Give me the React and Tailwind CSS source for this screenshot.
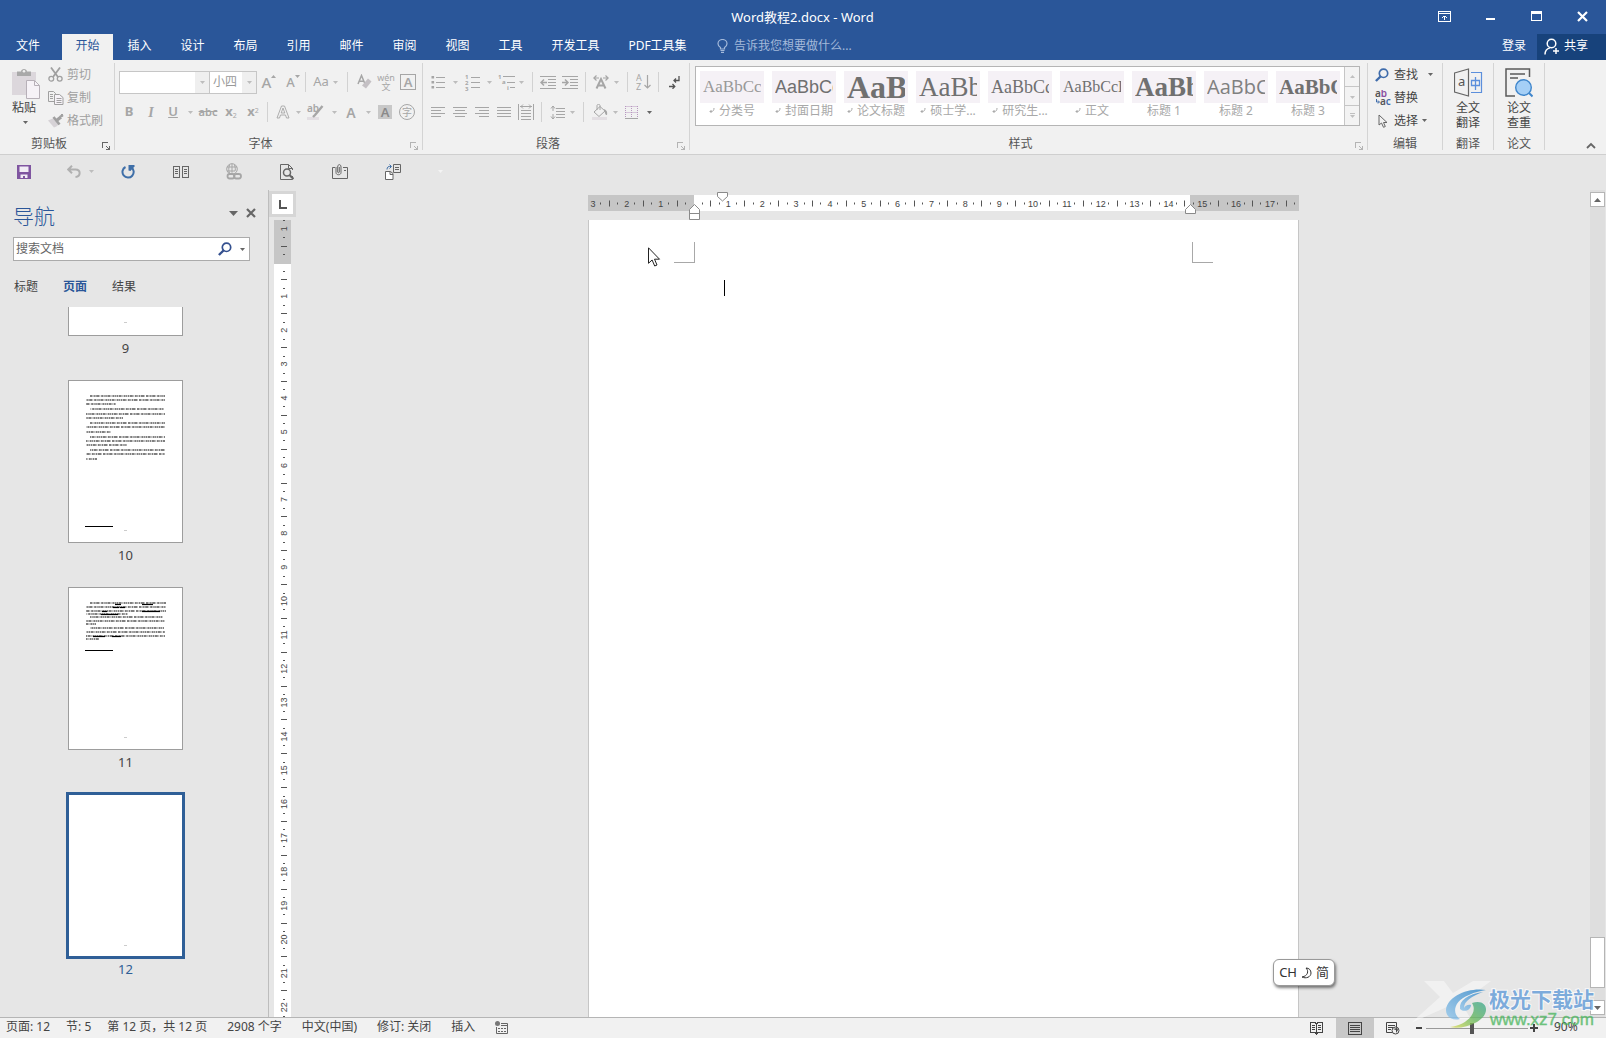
import clsx from "clsx";

const Svg = ({ w, h, children, ...rest }) => (
  <svg width={w} height={h} viewBox={`0 0 ${w} ${h}`} fill="none" stroke="currentColor" className="shrink-0" aria-hidden="true" {...rest}>
    {children}
  </svg>
);

const Caret = ({ className = "w-3", dark }) => (
  <span className={clsx("flex justify-center shrink-0", className, dark ? "text-[#666]" : "text-[#bdbdbd]")}>
    <Svg w={5} h={3}>
      <path d="M0 0h5L2.5 3z" fill="currentColor" stroke="none" />
    </Svg>
  </span>
);

const Sep = ({ className = "mx-1" }) => <span className={clsx("w-px h-5 bg-[#d2d2d2] shrink-0", className)} />;

const Tool = ({ label, className = "w-[22px]", children }) => (
  <button aria-label={label} className={clsx("h-6 flex items-center justify-center shrink-0 text-[#a6a6a6]", className)}>
    {children}
  </button>
);

const Launcher = ({ dark }) => (
  <button aria-label="更多选项" className={clsx("w-4 h-5 flex items-center justify-center shrink-0 pt-[5px]", dark ? "text-[#666]" : "text-[#b4b4b4]")}>
    <Svg w={8} h={8} shapeRendering="crispEdges">
      <path d="M.5 6V.5H6M4 4l3 3M7.5 3.5v4h-4" />
    </Svg>
  </button>
);

function Group({ label, launcher, dark, className, children }) {
  return (
    <section aria-label={label} className={clsx("flex flex-col border-r border-[#d4d4d4] mb-1 mt-[3px]", className)}>
      <div className="flex-1 min-h-0">{children}</div>
      <div className="flex h-[13px] items-center">
        <span className="flex-1 text-center text-[#555]">{label}</span>
        {launcher && <Launcher dark={dark} />}
      </div>
    </section>
  );
}

/* ---------- title bar and tabs ---------- */

function TitleBar() {
  return (
    <header className="flex h-[34px] items-center bg-[#2a5699] text-white">
      <div className="w-[184px]" />
      <h1 className="flex-1 pt-[2px] text-center text-[13px]">Word教程2.docx - Word</h1>
      <div className="flex w-[185px] items-center pb-px">
        <button aria-label="功能区显示选项" className="flex w-[46px] justify-center">
          <Svg w={13} h={11} shapeRendering="crispEdges">
            <path d="M.5.5h12v10H.5zM1 2.5h11M6.5 9V4.5M4 6.5h1M5 5.5h3M8 6.5h1" />
          </Svg>
        </button>
        <button aria-label="最小化" className="flex w-[46px] justify-center pt-1">
          <Svg w={9} h={2}><path d="M0 1h9" strokeWidth="2" /></Svg>
        </button>
        <button aria-label="最大化" className="flex w-[46px] justify-center">
          <Svg w={11} h={11} shapeRendering="crispEdges">
            <path d="M.5.5h10v9H.5zM0 2h11M0 1h11" />
          </Svg>
        </button>
        <button aria-label="关闭" className="flex w-[46px] justify-center">
          <Svg w={11} h={11}><path d="M1 1l9 9M10 1l-9 9" strokeWidth="2.2" /></Svg>
        </button>
      </div>
    </header>
  );
}

const tabs = ["开始", "插入", "设计", "布局", "引用", "邮件", "审阅", "视图", "工具"];

function TabBar() {
  return (
    <nav className="flex h-[26px] bg-[#2a5699] text-white *:pb-[2px]">
      <button className="mr-[6px] w-14">文件</button>
      {tabs.map((t) => (
        <button key={t} className={clsx(t === "开始" ? "w-[51px] bg-[#f1f1f1] text-[#2a5699]" : "w-[53px]")}>
          {t}
        </button>
      ))}
      <button className="w-[77px]">开发工具</button>
      <button className="w-[87px]">PDF工具集</button>
      <button className="ml-4 flex items-center gap-[6px] text-[#a3b9da]">
        <Svg w={11} h={14}>
          <path d="M3.5 10V8.6C2 7.6 1 6.500 1 4.800a4.400 4.200 0 0 1 9 0C10 6.500 9 7.600 7.500 8.600V10zM3.500 11.500h4M4 13.300h3" strokeWidth="1.200" />
        </Svg>
        告诉我您想要做什么...
      </button>
      <div className="flex-1" />
      <button className="w-[46px]">登录</button>
      <button className="flex w-[69px] items-center gap-1 bg-[#17427b] pl-[7px]">
        <Svg w={16} h={17}>
          <circle cx="7.500" cy="5.500" r="4.300" strokeWidth="1.500" />
          <path d="M1 16.500c0-3.500 2-5.800 5-6.600M12 10v6M9 13h6" strokeWidth="1.500" />
        </Svg>
        共享
      </button>
    </nav>
  );
}

/* ---------- ribbon ---------- */

const PasteIcon = () => (
  <Svg w={28} h={31}>
    <path d="M0 4h24v23H0z" fill="#dcd7dc" stroke="none" />
    <path d="M5 8V3.500h4C9 0 15 0 15 3.500h4V8z" fill="#a9a9a9" stroke="none" />
    <circle cx="12" cy="3.300" r="1.300" fill="#f1f1f1" stroke="none" />
    <path d="M14.500 12.500h8l5 5v13h-13z" fill="#f6f2f7" stroke="#b7b0b8" />
    <path d="M22.500 12.500v5h5" stroke="#b7b0b8" />
  </Svg>
);

const CutIcon = () => (
  <Svg w={15} h={15}>
    <path d="M3 .5l7 9.500M12 .5l-7 9.500" strokeWidth="1.800" />
    <circle cx="3.300" cy="11.700" r="2.400" strokeWidth="1.300" />
    <circle cx="11.700" cy="11.700" r="2.400" strokeWidth="1.300" />
  </Svg>
);

const CopyIcon = () => (
  <Svg w={16} h={14}>
    <path d="M6 10.500H.5V.5h5l2 2V4M2 3.500h3M2 5.500h3M2 7.500h3" />
    <path d="M6.500 3.500h5l3.500 3v7H6.500z" fill="#f6f2f7" />
    <path d="M8.500 7.500h5M8.500 9.500h5M8.500 11.500h5" />
  </Svg>
);

const BrushIcon = () => (
  <Svg w={16} h={14}>
    <path d="M0 6.500L6 4l5 6c-2 2.200-3.500 3-5 3.500z" fill="#d6d2d6" stroke="none" />
    <path d="M5.500 3l6 7.500" strokeWidth="2.600" />
    <path d="M8.500 6.500L13 3" strokeWidth="3.400" />
    <path d="M12 2.500l2.500-2M13.500 .5l1.500 2" strokeWidth="1.600" />
  </Svg>
);

function ClipboardGroup() {
  const items = [["剪切", CutIcon], ["复制", CopyIcon], ["格式刷", BrushIcon]];
  return (
    <Group label="剪贴板" launcher dark className="w-[115px]">
      <div className="flex">
        <button className="flex w-12 flex-col items-center pl-[3px] pt-[5px] text-[#444]">
          <PasteIcon />
          <span className="-ml-[3px] leading-[18px]">粘贴</span>
          <span className="pt-[4px]"><Caret dark /></span>
        </button>
        <div className="flex flex-col">
          {items.map(([name, Icon]) => (
            <button key={name} className="flex h-[23px] items-center text-[#a0a0a0]">
              <span className="flex w-[19px]"><Icon /></span>
              {name}
            </button>
          ))}
        </div>
      </div>
    </Group>
  );
}

function FontGroup() {
  return (
    <Group label="字体" launcher className="w-[308px]">
      <div className="flex h-6 mt-[7px] items-center pl-1">
        <label className="relative flex h-[23px] w-[91px] items-center border border-[#c6c6c6] bg-white">
          <select aria-label="字体" className="h-full w-full appearance-none bg-transparent" defaultValue="">
            <option value=""></option>
          </select>
          <span className="pointer-events-none absolute right-0 flex h-full items-center bg-[#efefef] px-px"><Caret /></span>
        </label>
        <label className="relative flex h-[23px] w-[47px] items-center border border-l-0 border-[#c6c6c6] bg-white">
          <select aria-label="字号" className="h-full w-full appearance-none bg-transparent pl-[3px] text-[#999]" defaultValue="小四">
            <option>小四</option>
          </select>
          <span className="pointer-events-none absolute right-0 flex h-full items-center bg-[#efefef] px-px"><Caret /></span>
        </label>
        <Tool label="增大字号" className="w-6">
          <span className="text-[15px] font-medium leading-5">A</span>
          <Svg w={5} h={14}><path d="M0 3h5L2.500 0z" fill="currentColor" stroke="none" /></Svg>
        </Tool>
        <Tool label="减小字号" className="w-6">
          <span className="text-[13px] font-medium leading-5">A</span>
          <Svg w={5} h={14}><path d="M0 0h5L2.500 3z" fill="currentColor" stroke="none" /></Svg>
        </Tool>
        <Sep className="mr-[5px]" />
        <Tool label="更改大小写" className="w-5"><span className="text-[13px]">Aa</span></Tool>
        <Caret className="w-2" />
        <Sep className="ml-2 mr-[5px]" />
        <Tool label="清除所有格式">
          <Svg w={15} h={16}>
            <path d="M1 10L4.500 1.500 8 10M2.200 7.200h4.600" strokeWidth="1.500" />
            <path d="M11 4.500l3.500 3L9 14.500 5 11.500z" fill="#c4c0c4" stroke="none" />
          </Svg>
        </Tool>
        <Tool label="拼音指南">
          <span className="flex flex-col items-center text-[9px] leading-[9px]">
            <span>wén</span>
            <span>文</span>
          </span>
        </Tool>
        <Tool label="字符边框">
          <span className="flex size-4 items-center justify-center border border-[#a6a6a6] text-[13px] font-semibold leading-none">A</span>
        </Tool>
      </div>
      <div className="flex h-6 mt-[6px] items-center pl-[3px]">
        <Tool label="加粗"><span className="text-[13px] font-bold">B</span></Tool>
        <Tool label="倾斜"><span className="font-['Liberation_Serif',serif] text-[14px] font-bold italic">I</span></Tool>
        <Tool label="下划线"><span className="text-[13px] font-semibold underline">U</span></Tool>
        <Caret />
        <Tool label="删除线" className="w-6"><span className="text-[11px] font-semibold line-through">abc</span></Tool>
        <Tool label="下标"><span className="text-[13px] font-bold">x<sub className="text-[7px] font-normal">2</sub></span></Tool>
        <Tool label="上标"><span className="text-[13px] font-bold">x<sup className="text-[7px] font-normal">2</sup></span></Tool>
        <Sep className="ml-[3px] mr-1" />
        <Tool label="文本效果">
          <Svg w={14} h={14}>
            <path d="M1 13L5.500 1h3L13 13h-2.500L9.500 10h-5L3.500 13zM5.200 8h3.600L7 3z" strokeWidth=".9" />
          </Svg>
        </Tool>
        <Caret className="w-2" />
        <Tool label="突出显示" className="w-[26px]">
          <Svg w={17} h={16}>
            <path d="M0 13h12v3H0z" fill="#e3dfe3" stroke="none" />
            <text x="0" y="8" fontSize="10" fontWeight="600" fill="currentColor" stroke="none">ab</text>
            <path d="M15.500 2L8 11l-2 2" strokeWidth="2.400" />
          </Svg>
        </Tool>
        <Caret />
        <Tool label="字体颜色"><span className="text-[14px] font-semibold">A</span></Tool>
        <Caret />
        <Tool label="字符底纹">
          <span className="flex h-[14px] w-[14px] items-center justify-center bg-[#c8c8c8] text-[13px] font-semibold leading-none text-[#8a8a8a]">A</span>
        </Tool>
        <Tool label="带圈字符">
          <span className="flex size-4 items-center justify-center rounded-full border border-[#a6a6a6] text-[10px] leading-none">字</span>
        </Tool>
      </div>
    </Group>
  );
}

const lineSets = {
  left: [[0, 14], [0, 10], [0, 14], [0, 10]],
  center: [[0, 14], [2, 12], [0, 14], [2, 12]],
  right: [[0, 14], [4, 14], [0, 14], [4, 14]],
  justify: [[0, 14], [0, 14], [0, 14], [0, 14]],
};

const Lines = ({ kind }) => (
  <Svg w={14} h={11} shapeRendering="crispEdges">
    {lineSets[kind].map(([a, b], i) => (
      <path key={i} d={`M${a} ${i * 3 + 0.5}H${b}`} />
    ))}
  </Svg>
);

function ParagraphGroup() {
  return (
    <Group label="段落" launcher className="w-[267px]">
      <div className="flex h-6 mt-[7px] items-center pl-1">
        <Tool label="项目符号">
          <Svg w={14} h={15}>
            <path d="M5 2.500h9M5 7.500h9M5 12.500h9" />
            <path d="M.5 1h2.600v2.600H.5zM.5 6h2.600v2.600H.5zM.5 11h2.600v2.600H.5z" fill="currentColor" stroke="none" />
          </Svg>
        </Tool>
        <Caret />
        <Tool label="编号">
          <Svg w={15} h={17}>
            <path d="M6 3.500h9M6 8.500h9M6 13.500h9" />
            <g fontSize="6" fontWeight="700" fill="currentColor" stroke="none">
              <text x="0" y="5">1</text>
              <text x="0" y="11">2</text>
              <text x="0" y="17">3</text>
            </g>
          </Svg>
        </Tool>
        <Caret />
        <Tool label="多级列表">
          <Svg w={17} h={17}>
            <path d="M5 2.500h12M9 8.500h8M12 13.500h5" />
            <g fontSize="6" fontWeight="700" fill="currentColor" stroke="none">
              <text x="0" y="5">1</text>
              <text x="4" y="10">a</text>
              <text x="9" y="16">i</text>
            </g>
          </Svg>
        </Tool>
        <Caret className="w-2" />
        <Sep className="ml-[7px] mr-1" />
        <Tool label="减少缩进量">
          <Svg w={16} h={13}>
            <path d="M0 .5h16M8 3.500h8M8 6.500h8M8 9.500h8M0 12.500h16" />
            <path d="M7 6.500H1M4 3.500l-3 3 3 3" strokeWidth="1.500" />
          </Svg>
        </Tool>
        <Tool label="增加缩进量">
          <Svg w={16} h={13}>
            <path d="M0 .5h16M8 3.500h8M8 6.500h8M8 9.500h8M0 12.500h16" />
            <path d="M0 6.500h6M3 3.500l3 3-3 3" strokeWidth="1.500" />
          </Svg>
        </Tool>
        <Sep />
        <Tool label="中文版式">
          <Svg w={16} h={14}>
            <path d="M3.500 13.500L8 4l4.500 9.500M5 10.500h6" strokeWidth="2" />
            <path d="M3.500 .5L.8 3l2.700 2.500M1 3h5M12.500 .5L15.200 3l-2.700 2.500M15 3h-5" strokeWidth="1.200" />
          </Svg>
        </Tool>
        <Caret className="w-2" />
        <Sep className="ml-[7px] mr-1" />
        <Tool label="排序">
          <Svg w={15} h={16}>
            <g fontSize="9" fill="currentColor" stroke="none">
              <text x="0" y="7">A</text>
              <text x="0" y="16">Z</text>
            </g>
            <path d="M11.500 1v13M8.500 11l3 3 3-3" strokeWidth="1.200" />
          </Svg>
        </Tool>
        <Sep />
        <Tool label="显示编辑标记">
          <Svg w={11} h={13} stroke="#555">
            <path d="M10 0v4.500H5.500M7 2.500l-2 2 2 2M0 10.500h5M3.500 8l2.300 2.500-2.300 2.300" strokeWidth="1.300" />
          </Svg>
        </Tool>
      </div>
      <div className="flex h-6 mt-[6px] items-center pl-1">
        <Tool label="左对齐"><Lines kind="left" /></Tool>
        <Tool label="居中"><Lines kind="center" /></Tool>
        <Tool label="右对齐"><Lines kind="right" /></Tool>
        <Tool label="两端对齐"><Lines kind="justify" /></Tool>
        <Tool label="分散对齐">
          <Svg w={16} h={16}>
            <path d="M.5 0v16M15.500 0v16M3 6.500h10M3 9.500h10M3 12.500h10M3 15.500h10M2 2.500h12M5 .5l-2 2 2 2M11 .5l2 2-2 2" />
          </Svg>
        </Tool>
        <Sep />
        <Tool label="行和段落间距">
          <Svg w={15} h={15}>
            <path d="M6 3.500h9M6 6.500h9M6 9.500h9M6 12.500h9M3 1v5M1 3.500L3 1l2 2.500M3 9v5M1 11.500L3 14l2-2.500" />
          </Svg>
        </Tool>
        <Caret className="w-2" />
        <Sep className="ml-[7px] mr-[5px]" />
        <Tool label="底纹">
          <Svg w={16} h={16}>
            <path d="M0 13h15v3H0z" fill="#e3dfe3" stroke="none" />
            <path d="M2 8l6-5.500L13 7l-6 5.500zM5 6V1.500c0-1.500 3-1.500 3 0V6" />
            <path d="M12 5c3 1.500 3.500 3 3 6-1.500 0-2-1-3-6z" fill="currentColor" stroke="none" />
          </Svg>
        </Tool>
        <Caret className="w-2" />
        <Tool label="边框" className="w-6">
          <Svg w={13} h={13}>
            <path d="M.5 .5h12M.5 6.500h12M.5 0v12M6.500 0v12M12.500 0v12" stroke="#b898c0" strokeDasharray="1 1" />
            <path d="M0 12.500h13" stroke="#a6a6a6" />
          </Svg>
        </Tool>
        <Caret dark />
      </div>
    </Group>
  );
}

const styleItems = [
  { name: "分类号", mark: true, sample: "AaBbCc", font: "font-['Liberation_Serif',serif] text-[17px] text-[#999]" },
  { name: "封面日期", mark: true, sample: "AaBbCc", font: "font-['Liberation_Sans',sans-serif] text-[18px] text-[#707070]" },
  { name: "论文标题", mark: true, sample: "AaBb", font: "font-['Liberation_Serif',serif] text-[32px] font-bold text-[#707070]" },
  { name: "硕士学...", mark: true, sample: "AaBb", font: "font-['Liberation_Serif',serif] text-[27px] text-[#707070]" },
  { name: "研究生...", mark: true, sample: "AaBbCc", font: "font-['Liberation_Serif',serif] text-[18px] text-[#707070]" },
  { name: "正文", mark: true, sample: "AaBbCcDd", font: "font-['Liberation_Serif',serif] text-[16px] text-[#707070]" },
  { name: "标题 1", sample: "AaBb", font: "font-['Liberation_Serif',serif] text-[27px] font-bold text-[#707070]" },
  { name: "标题 2", sample: "AaBbCc", font: "font-['Open_Sans',sans-serif] text-[20px] text-[#808080]" },
  { name: "标题 3", sample: "AaBbCc", font: "font-['Liberation_Serif',serif] text-[21px] font-bold text-[#707070]" },
];

function StylesGroup() {
  return (
    <Group label="样式" launcher className="min-w-0 flex-1">
      <div className="ml-[5px] mr-[7px] mt-[3px] flex h-[60px] border border-[#b5b5b5] bg-white">
        <div className="flex min-w-0 flex-1 overflow-hidden">
          {styleItems.map((s) => (
            <button key={s.name} className="flex w-[72px] shrink-0 flex-col items-center pt-1">
              <span className="flex h-8 w-16 items-center overflow-hidden bg-[#f5f1f6] px-[3px]">
                <span className={clsx("block w-full overflow-hidden text-left leading-8", s.font)}>{s.sample}</span>
              </span>
              <span className="flex items-center gap-1 leading-4 text-[#a8a8a8]">
                {s.mark && (
                  <Svg w={6} h={6}><path d="M5 0c0 2-.5 3.500-3 3.500H1M2.500 2L1 3.500 2.500 5" /></Svg>
                )}
                {s.name}
              </span>
            </button>
          ))}
        </div>
        <div className="flex w-[15px] flex-col divide-y divide-[#c6c6c6] border-l border-[#c6c6c6] bg-[#f3f3f3]">
          {["上一行", "下一行", "其他"].map((n) => (
            <button key={n} aria-label={n} className="flex flex-1 items-center justify-center text-[#c0c0c0]">
              <Svg w={5} h={5}>
                {n === "其他" && <path d="M0 .5h5" />}
                <path d={n === "上一行" ? "M0 4h5L2.500 1z" : "M0 2h5L2.500 5z"} fill="currentColor" stroke="none" />
              </Svg>
            </button>
          ))}
        </div>
      </div>
    </Group>
  );
}

const SearchGlyph = ({ size = 14, color = "#3f6cab" }) => (
  <svg width={size} height={size} viewBox="0 0 14 14" fill="none" stroke={color} aria-hidden="true">
    <circle cx="8.500" cy="5.300" r="4.200" strokeWidth="1.700" />
    <path d="M5.500 8.500L.9 13" strokeWidth="2.400" />
  </svg>
);

function EditGroup() {
  return (
    <Group label="编辑" className="w-[75px]">
      <div className="flex flex-col pl-[7px] text-[#444]">
        <button className="flex h-[23px] items-center">
          <span className="flex w-[19px]"><SearchGlyph /></span>查找
          <Caret dark className="ml-[6px] w-3" />
        </button>
        <button className="flex h-[23px] items-center">
          <span className="flex w-[19px]">
            <Svg w={17} h={16}>
              <g fontSize="10" fontWeight="600" stroke="none">
                <text x="0" y="7" fill="#555">a<tspan fill="#8a4fa0">b</tspan></text>
                <text x="5" y="15" fill="#555">a<tspan fill="#3f6cab">c</tspan></text>
              </g>
              <path d="M1.500 9v3H4M3 10.500L4.500 12 3 13.500" stroke="#3f6cab" />
            </Svg>
          </span>
          替换
        </button>
        <button className="flex h-[23px] items-center">
          <span className="flex w-[19px] pl-[3px]">
            <Svg w={10} h={14} stroke="#666">
              <path d="M1 1v10l2.500-2 2 4.300 1.800-.8L5.500 8.500H9z" />
            </Svg>
          </span>
          选择
          <Caret dark />
        </button>
      </div>
    </Group>
  );
}

const TranslateIcon = () => (
  <Svg w={29} h={29}>
    <path d="M.5 5L14.500 1v27L.5 24z" stroke="#666" strokeWidth="1.200" />
    <text x="4" y="18" fontSize="13" fill="#555" stroke="none">a</text>
    <path d="M17 4.500h10.500v20H17" stroke="#5c8fdc" strokeWidth="1.200" />
    <path d="M17.500 12.500h8v5h-8zM21.500 9v13" stroke="#5c8fdc" strokeWidth="1.300" />
  </Svg>
);

const CheckIcon = () => (
  <Svg w={28} h={30}>
    <path d="M24.500 9V1H1v27h9M5 6h15M5 10h8" stroke="#5a5a5a" strokeWidth="1.500" />
    <circle cx="18.500" cy="19.500" r="7.800" fill="#a5cff6" stroke="#3f86cc" strokeWidth="1.400" />
    <path d="M24 25l3.500 3.500" stroke="#3f86cc" strokeWidth="2" />
  </Svg>
);

function BigGroup({ label, lines, icon }) {
  return (
    <Group label={label} className="w-[51px]">
      <button className="flex w-full flex-col items-center pt-[5px] leading-[15px] text-[#444]">
        <span className="mb-[3px] flex h-[29px]">{icon}</span>
        {lines.map((l) => <span key={l}>{l}</span>)}
      </button>
    </Group>
  );
}

function Ribbon() {
  return (
    <div className="flex h-[95px] border-b border-[#cfcfcf] bg-[#f1f1f1]">
      <ClipboardGroup />
      <FontGroup />
      <ParagraphGroup />
      <StylesGroup />
      <EditGroup />
      <BigGroup label="翻译" lines={["全文", "翻译"]} icon={<TranslateIcon />} />
      <BigGroup label="论文" lines={["论文", "查重"]} icon={<CheckIcon />} />
      <div className="flex w-[61px] items-end justify-end pb-[5px] pr-[10px]">
        <button aria-label="折叠功能区" className="text-[#666]">
          <Svg w={10} h={7}><path d="M1 6l4-4 4 4" strokeWidth="1.800" /></Svg>
        </button>
      </div>
    </div>
  );
}

function QuickAccess() {
  const cell = "flex w-[53px] items-center justify-center";
  return (
    <div className="flex h-[35px] shrink-0 items-center pb-[2px] text-[#666]">
      <button aria-label="保存" className="flex w-12 justify-center">
        <Svg w={14} h={14}>
          <path d="M0 0h14v14H0z" fill="#7f55a0" stroke="none" />
          <path d="M2.500 1.500h9V7h-9zM3.500 9.500h7V13H8v-2H6v2H3.500z" fill="#f1ecf5" stroke="none" />
        </Svg>
      </button>
      <div className="flex w-[53px] items-center pl-[19px] text-[#b0b0b0]">
        <button aria-label="撤消">
          <Svg w={14} h={13}>
            <path d="M5 .8L1.200 4.500 5 8.200M1.500 4.500h7c5.500 0 5.500 7 0 7.500" strokeWidth="2" />
          </Svg>
        </button>
        <button aria-label="撤消列表" className="ml-1"><Caret /></button>
      </div>
      <button aria-label="重复" className={clsx(cell, "text-[#3f6fa8]")}>
        <Svg w={14} h={14}>
          <path d="M4.500 2A5.600 5.600 0 1 0 10 2.200" strokeWidth="2" />
          <path d="M7.500 0h6v1.500L9.500 6l-2-.5z" fill="currentColor" stroke="none" />
        </Svg>
      </button>
      <button aria-label="并排查看" className={cell}>
        <Svg w={16} h={12} shapeRendering="crispEdges">
          <path d="M.5.5h6v11h-6zM9.500.5h6v11h-6zM2 3.500h3M2 5.500h3M2 7.500h3M11 3.500h3M11 5.500h3M11 7.500h3" />
        </Svg>
      </button>
      <button aria-label="超链接" className={clsx(cell, "text-[#a6a6a6]")}>
        <Svg w={16} h={17}>
          <circle cx="6" cy="6" r="5.300" />
          <path d="M6 .7v9M1 4h10M1 8h8M3.500 2c-1 3-1 6 0 8M8.500 2c1 3 1 5 .5 6" />
          <rect x="1.500" y="11" width="7" height="4.500" rx="2.200" strokeWidth="1.800" fill="#e6e6e6" />
          <rect x="8" y="11" width="7" height="4.500" rx="2.200" strokeWidth="1.800" />
        </Svg>
      </button>
      <button aria-label="打印预览" className={cell}>
        <Svg w={14} h={16}>
          <path d="M12.500 12v3.500H.5V.5h8l4 4V6M8.500 .5v4h4" />
          <circle cx="7" cy="8.500" r="3.500" strokeWidth="1.500" />
          <path d="M9.500 11l4 4" strokeWidth="2.200" />
        </Svg>
      </button>
      <button aria-label="附件" className={cell}>
        <Svg w={16} h={15}>
          <path d="M3 3.500H.5v11h15v-11H11M12 6.500h2" />
          <path d="M4 3v5.500c0 3 5 3 5 0V3C9-.2 5.700-.2 5.700 3v5c0 1 1.600 1 1.600 0V3" />
        </Svg>
      </button>
      <button aria-label="合并域" className={cell}>
        <Svg w={16} h={16}>
          <path d="M8.500.5h7v8h-7zM10 3.500h4M10 5.500h4" />
          <path d="M.5 7.500h5l2.500 2v6H.5zM5 7.500v3h3" fill="#fff" />
          <path d="M2 5.500C2 3 3.500 2 6 2.500M4.500 .5l2 2-2 2" stroke="#3f6fa8" />
        </Svg>
      </button>
      <button aria-label="自定义快速访问工具栏" className="ml-[19px] text-[#f4f4f4]">
        <Svg w={5} h={3}><path d="M0 0h5L2.500 3z" fill="currentColor" stroke="none" /></Svg>
      </button>
    </div>
  );
}

/* ---------- navigation pane ---------- */

// y, x start, x end for each printed line of a thumbnail
const page10 = [
  [15, 21, 96], [19, 17, 96], [23, 17, 47], [28, 21, 95], [33, 17, 96], [37, 17, 54], [42, 21, 96], [46, 17, 96],
  [51, 17, 42], [56, 21, 96], [60, 17, 96], [64, 17, 58], [69, 21, 96], [73, 17, 96], [78, 17, 28],
];
const page11 = [
  [15, 21, 97], [19, 17, 97], [23, 17, 97], [26, 17, 59], [29, 21, 94], [33, 17, 96], [36, 17, 27],
  [40, 21, 95], [44, 17, 96], [48, 17, 96], [51, 17, 30],
];
const links11 = [[16, 46, 52], [16, 73, 84], [19, 44, 50], [19, 51, 56], [23, 73, 91], [23, 33, 38], [26, 32, 49], [48, 24, 36], [48, 43, 52]];

function PageText({ lines, links = [], ruleY, footY }) {
  return (
    <svg viewBox="0 0 113 161" className="h-full w-full" aria-hidden="true">
      {lines.map(([y, a, b], i) => (
        <path key={i} d={`M${a} ${y}H${b}`} stroke="#555" strokeWidth="1.300" strokeDasharray="2 .5 1 .6 1.500 .6 3 .5 .5 1" strokeDashoffset={i * 3} />
      ))}
      {links.map(([y, a, b], i) => (
        <path key={i} d={`M${a} ${y}.5H${b}`} stroke="#000" strokeWidth="1.200" />
      ))}
      {ruleY && <path d={`M16 ${ruleY}.5h28`} stroke="#000" />}
      <path d={`M55 ${footY}.5h3`} stroke="#ccc" />
    </svg>
  );
}

const Thumb = ({ n, active, first, children }) => (
  <li className={clsx("flex flex-col items-center", first ? "h-[73px]" : "h-[207px]")}>
    <button
      aria-label={`第 ${n} 页`}
      className={clsx(
        "w-[115px] shrink-0 border border-[#9d9d9d] bg-white",
        first ? "h-[29px] border-t-0" : "h-[163px]",
        active && "outline-[3px] -outline-offset-1 outline-[#2f5f97]"
      )}
    >
      {children}
    </button>
    <span className={clsx("pt-[3px] text-[13px] leading-[18px]", active ? "text-[#2f5f97]" : "text-[#444]")}>{n}</span>
  </li>
);

function NavPane() {
  return (
    <aside className="flex w-[269px] shrink-0 flex-col border-r border-[#bdbdbd]">
      <div className="flex items-center justify-between pl-[13px] pr-3 pt-[9px]">
        <h2 className="text-[21px] font-light leading-[34px] text-[#2a5699]">导航</h2>
        <div className="flex items-center gap-2 pb-[6px] text-[#666]">
          <button aria-label="任务窗格选项">
            <Svg w={9} h={5}><path d="M0 0h9L4.500 5z" fill="currentColor" stroke="none" /></Svg>
          </button>
          <button aria-label="关闭导航">
            <Svg w={10} h={10}><path d="M1 1l8 8M9 1L1 9" strokeWidth="2.200" /></Svg>
          </button>
        </div>
      </div>
      <div className="ml-[13px] mr-[18px] mt-1 flex h-6 items-center border border-[#ababab] bg-white">
        <input aria-label="搜索文档" placeholder="搜索文档" className="min-w-0 flex-1 bg-transparent px-[2px] outline-none placeholder:text-[#666]" />
        <button aria-label="搜索"><SearchGlyph color="#34508f" /></button>
        <button aria-label="搜索选项" className="ml-1 mr-px"><Caret dark /></button>
      </div>
      <div className="flex gap-[25px] pl-[14px] pt-[17px] leading-[18px] text-[#444]">
        <button>标题</button>
        <button className="font-bold text-[#2a5699]">页面</button>
        <button>结果</button>
      </div>
      <ul className="mt-[11px] flex min-h-0 flex-1 flex-col overflow-hidden pr-[17px]">
        <Thumb n={9} first>
          <svg viewBox="0 0 113 28" className="h-full w-full"><path d="M55 15.500h3" stroke="#ccc" /></svg>
        </Thumb>
        <Thumb n={10}><PageText lines={page10} ruleY={145} footY={149} /></Thumb>
        <Thumb n={11}><PageText lines={page11} links={links11} ruleY={62} footY={149} /></Thumb>
        <Thumb n={12} active><PageText lines={[]} footY={150} /></Thumb>
      </ul>
    </aside>
  );
}

/* ---------- rulers ---------- */

const CM = 33.85;

function marks(from, to) {
  const out = [];
  for (let q = from; q <= to; q++) {
    if (q === 0) continue;
    out.push({ q, kind: q % 4 === 0 ? "num" : q % 2 === 0 ? "half" : "dot", pos: (q * CM) / 4 });
  }
  return out;
}

function HorizontalRuler() {
  const zero = 106.5;
  return (
    <svg width="711" height="28" viewBox="0 0 711 28" className="block" fontFamily="Liberation Sans, Arial, sans-serif">
      <path d="M0 3h711v16H0z" fill="#c6c6c6" />
      <path d="M106 3h496v16H106z" fill="#fff" />
      {marks(-12, 71).map(({ q, kind, pos }) => {
        const x = zero + pos;
        if (kind === "num") return <text key={q} x={x} y="15" fontSize="9" textAnchor="middle" fill="#444">{Math.abs(q / 4)}</text>;
        const r = kind === "half" ? 3 : 1;
        return <path key={q} d={`M${Math.round(x) - 0.5} ${11.5 - r}v${r * 2}`} stroke="#555" />;
      })}
      <g fill="#fff" stroke="#8a8a8a">
        <path d="M129.500 .5h10v4l-5 4.500-5-4.500z" />
        <path d="M101.500 27.500v-10l5-5 5 5v10zM101.500 21.500h10" />
        <path d="M597.500 21.500v-4l5-5 5 5v4z" />
      </g>
    </svg>
  );
}

function VerticalRuler() {
  const zero = 42.5;
  return (
    <div className="flex w-[27px] shrink-0 flex-col items-center overflow-hidden pt-px">
      <button aria-label="制表符" className="flex h-[26px] w-[27px] shrink-0 items-center justify-center border-[3px] border-[#d6d6d6] bg-white">
        <Svg w={8} h={9}><path d="M1 0v8h7" stroke="#555" strokeWidth="2" /></Svg>
      </button>
      <svg width="17" height="797" viewBox="0 0 17 797" className="mt-[3px] block shrink-0" fontFamily="Liberation Sans, Arial, sans-serif">
        <path d="M0 0h17v797H0z" fill="#fff" />
        <path d="M0 0h17v44H0z" fill="#c6c6c6" />
        {marks(-5, 89).map(({ q, kind, pos }) => {
          const y = zero + pos;
          if (kind === "num")
            return <text key={q} transform={`translate(13 ${y}) rotate(-90)`} fontSize="9" textAnchor="middle" fill="#444">{Math.abs(q / 4)}</text>;
          const r = kind === "half" ? 3 : 1;
          return <path key={q} d={`M${10 - r} ${Math.round(y) + 0.5}h${r * 2}`} stroke="#555" />;
        })}
      </svg>
    </div>
  );
}

/* ---------- document ---------- */

function DocumentArea() {
  return (
    <main className="flex min-w-0 flex-1 justify-center overflow-hidden">
      <div className="flex w-[711px] shrink-0 flex-col pt-[2px]">
        <HorizontalRuler />
        <div className="relative flex-1 border-x border-[#c6c6c6] bg-white">
          <div className="flex justify-between px-[85px] pt-[22px]">
            <span className="size-[21px] border-b border-r border-[#a8a8a8]" />
            <span className="size-[21px] border-b border-l border-[#a8a8a8]" />
          </div>
          <div className="ml-[135px] mt-[17px] h-4 w-px bg-black" />
          <svg width="13" height="20" viewBox="0 0 13 20" className="absolute left-[59px] top-[27px]" aria-hidden="true">
            <path d="M.5 .8v15.500l3.600-3.300 2.600 6 2.300-1-2.500-5.800h5z" fill="#fff" stroke="#222" />
          </svg>
        </div>
      </div>
    </main>
  );
}

function ScrollBar() {
  const btn = "flex h-[15px] w-[15px] shrink-0 items-center justify-center border border-[#b5b5b5] bg-white text-[#666]";
  return (
    <div className="flex w-4 shrink-0 flex-col pr-px">
      <div className="flex flex-1 flex-col bg-[#dedede] pb-[2px] pt-[2px]">
        <button aria-label="向上滚动" className={btn}>
          <Svg w={7} h={4}><path d="M0 4h7L3.500 0z" fill="currentColor" stroke="none" /></Svg>
        </button>
        <div className="flex-1" />
        <div className="h-[51px] border border-[#b5b5b5] bg-white" />
        <div className="h-3" />
        <button aria-label="向下滚动" className={btn}>
          <Svg w={7} h={4}><path d="M0 0h7L3.500 4z" fill="currentColor" stroke="none" /></Svg>
        </button>
      </div>
    </div>
  );
}

/* ---------- status bar ---------- */

function StatusBar() {
  return (
    <footer className="flex h-[21px] shrink-0 items-center border-t border-[#b5b5b5] bg-[#f1f1f1] text-[#444]">
      <div className="flex flex-1 items-center gap-5 pb-[2px] pl-[6px]">
        <div className="flex gap-4">
          <span>页面: 12</span>
          <span>节: 5</span>
          <span>第 12 页，共 12 页</span>
        </div>
        <span>2908 个字</span>
        <span>中文(中国)</span>
        <span>修订: 关闭</span>
        <span>插入</span>
        <Svg w={13} h={13} stroke="#666">
          <path d="M6 2.500h6.500v10h-11V6M6 4.500h6M3 7.500h2M6 7.500h2M9 7.500h2M3 10.500h2M6 10.500h2M9 10.500h2" />
          <circle cx="2.500" cy="2.500" r="2.500" fill="#777" stroke="none" />
        </Svg>
      </div>
      <button aria-label="阅读视图" className="flex w-[39px] justify-center">
        <Svg w={13} h={13} shapeRendering="crispEdges">
          <path d="M.5 .5h4l2 1 2-1h4v10h-4l-2 1-2-1h-4zM6.500 1v12M2 3.500h3M2 5.500h3M2 7.500h3M8 3.500h3M8 5.500h3M8 7.500h3" />
        </Svg>
      </button>
      <button aria-label="页面视图" className="flex h-full w-[38px] items-center justify-center bg-[#c8c8c8]">
        <Svg w={14} h={13} shapeRendering="crispEdges">
          <path d="M.5.5h13v12H.5zM2 3.500h10M2 5.500h10M2 7.500h10M2 9.500h10" />
        </Svg>
      </button>
      <button aria-label="Web 版式视图" className="flex w-[38px] justify-center">
        <Svg w={14} h={13}>
          <path d="M6 10.500H.5V.5h10V5M2 3.500h7M2 5.500h5M2 7.500h3" />
          <circle cx="9.500" cy="8.500" r="3.500" fill="#f1f1f1" />
          <path d="M7 7l3 1v3l2-3-1-2z" fill="currentColor" stroke="none" />
        </Svg>
      </button>
      <button aria-label="缩小" className="flex w-[14px] justify-center">
        <Svg w={6} h={2}><path d="M0 1h6" strokeWidth="2" /></Svg>
      </button>
      <input
        type="range"
        aria-label="显示比例"
        min="10"
        max="190"
        defaultValue="90"
        className="h-3 w-[102px] appearance-none bg-[linear-gradient(#999,#999)] bg-[length:100%_1px] bg-center bg-no-repeat [&::-webkit-slider-thumb]:h-[11px] [&::-webkit-slider-thumb]:w-1 [&::-webkit-slider-thumb]:appearance-none [&::-webkit-slider-thumb]:bg-[#555]"
      />
      <button aria-label="放大" className="flex w-3 justify-center">
        <Svg w={8} h={8}><path d="M0 4h8M4 0v8" strokeWidth="2" /></Svg>
      </button>
      <button className="ml-3 w-[54px] pb-[2px] pl-[2px] text-left">90%</button>
    </footer>
  );
}

function Watermark() {
  return (
    <div className="pointer-events-none absolute bottom-0 right-[9px] opacity-75" aria-hidden="true">
      <svg width="186" height="62" viewBox="0 0 186 62">
        <defs>
          <linearGradient id="swirlBlue" x1="0" y1="1" x2="1" y2="0">
            <stop offset="0" stopColor="#8cc4ec" />
            <stop offset="1" stopColor="#2380c8" />
          </linearGradient>
          <linearGradient id="swirlGreen" x1="0" y1="1" x2="1" y2="0">
            <stop offset="0" stopColor="#e0dc50" />
            <stop offset=".5" stopColor="#62b556" />
            <stop offset="1" stopColor="#35a58f" />
          </linearGradient>
        </defs>
        <path d="M13 5h20l9 12L62 5h18L50 27l10 16H45l-9-12L0 47l29-26z" fill="#fff" opacity=".6" />
        <path d="M75 14C58 11 36 20 35 34c0 7 6 11 14 9-8-5-7-18 9-24 6-3 12-4 17-5z" fill="url(#swirlBlue)" />
        <path d="M72 16c-15 2-24 8-23 17 4 4 11 1 11-4-3-1-6 1-7 3 0-7 8-12 19-16z" fill="url(#swirlBlue)" />
        <path d="M61 27c15-5 20 10 5 19-9 5-20 7-27 5 14-1 29-13 22-24z" fill="url(#swirlGreen)" />
        <text x="78" y="31" fontSize="21" fontWeight="600" fill="#5b98d8" stroke="#fff" strokeWidth="2" paintOrder="stroke">极光下载站</text>
        <text x="79" y="49" fontSize="17" fontWeight="400" fill="#42b356" stroke="#42b356" strokeWidth=".4" fontFamily="Liberation Sans, Arial, sans-serif">www.xz7.com</text>
      </svg>
    </div>
  );
}

export default function App() {
  return (
    <div className="relative flex h-screen flex-col overflow-hidden bg-[#e6e6e6] font-['Noto_Sans','Noto_Sans_CJK_SC',sans-serif] text-[12px] select-none">
      <TitleBar />
      <TabBar />
      <Ribbon />
      <QuickAccess />
      <div className="flex min-h-0 flex-1">
        <NavPane />
        <VerticalRuler />
        <DocumentArea />
        <ScrollBar />
      </div>
      <StatusBar />
      <div className="absolute bottom-[52px] right-[271px] flex h-[27px] items-center gap-1 rounded-md border border-[#999] bg-white px-[5px] text-[13px] text-[#333] shadow-[1px_2px_3px_rgba(0,0,0,0.5)]">
        <span>CH</span>
        <Svg w={11} h={12}><path d="M5 1c3 3 2 8-4 9 4 2 9 0 9-4 0-3-2-5-5-5z" /></Svg>
        <span>简</span>
      </div>
      <Watermark />
    </div>
  );
}
